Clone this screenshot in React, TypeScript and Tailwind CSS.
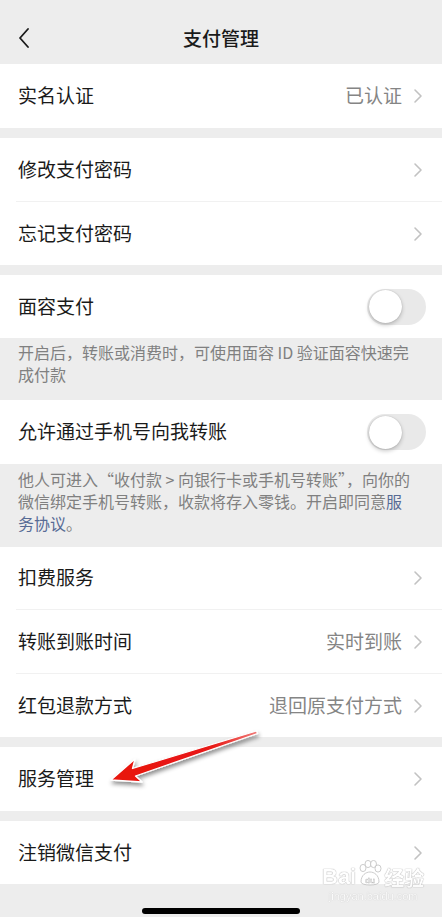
import React from "react";

function Chevron() {
  return (
    <svg width="10" height="16" viewBox="0 0 10 16" className="shrink-0">
      <path d="M2 2 L8 8 L2 14" fill="none" stroke="#c2c2c2" strokeWidth="1.6" strokeLinecap="round" strokeLinejoin="round" />
    </svg>
  );
}

function Toggle() {
  return (
    <div className="w-[59px] h-[36px] rounded-full bg-[#e9e9e9] p-[1.5px] flex items-center">
      <div className="w-[33px] h-[33px] rounded-full bg-white shadow-[0_2px_4px_rgba(0,0,0,0.22),0_0_1px_rgba(0,0,0,0.25)]" />
    </div>
  );
}

type RowProps = {
  label: string;
  value?: string;
  toggle?: boolean;
  h: string;
};

function Row({ label, value, toggle, h }: RowProps) {
  return (
    <div className={`flex items-center bg-white pl-[18px] ${toggle ? "pr-[16px]" : "pr-[19px]"} ${h}`}>
      <span className="flex-1 text-[19px] text-[#1a1a1a] leading-none mb-[3px]">{label}</span>
      {value && <span className="text-[19px] text-[#858585] leading-none mr-[11px] mb-[3px]">{value}</span>}
      {toggle ? <Toggle /> : <Chevron />}
    </div>
  );
}

function Divider() {
  return (
    <div className="bg-white">
      <div className="ml-[16px] h-px bg-[#f1f1f1]" />
    </div>
  );
}

function Gap() {
  return <div className="h-[10px]" />;
}

export default function App() {
  return (
    <div className="relative w-[442px] h-[917px] overflow-hidden bg-[#ededed] font-['Noto_Sans_CJK_SC','Noto_Sans',sans-serif]">
      {/* header */}
      <div className="h-[64px] pt-[11px] grid grid-cols-[1fr_auto_1fr] items-center">
        <div className="pl-[18px] flex items-center">
          <svg width="12" height="20" viewBox="0 0 12 20">
            <path d="M10 1 L2 10 L10 19" fill="none" stroke="#1a1a1a" strokeWidth="1.8" strokeLinecap="round" strokeLinejoin="round" />
          </svg>
        </div>
        <div className="text-[19px] font-medium text-[#1a1a1a] leading-none">支付管理</div>
        <div />
      </div>

      <Row label="实名认证" value="已认证" h="h-[64px]" />
      <Gap />
      <Row label="修改支付密码" h="h-[63px]" />
      <Divider />
      <Row label="忘记支付密码" h="h-[63px]" />
      <Gap />
      <Row label="面容支付" toggle h="h-[63px]" />
      <div className="h-[62px] pl-[18px] pr-[16px] pt-[3px] text-[16px] leading-[22px] text-[#808080] whitespace-nowrap">
        开启后，转账或消费时，可使用面容 ID 验证面容快速完
        <br />
        成付款
      </div>
      <Row label="允许通过手机号向我转账" toggle h="h-[64px]" />
      <div className="h-[83px] pl-[18px] pr-[16px] pt-[4px] text-[16px] leading-[22px] text-[#808080] whitespace-nowrap">
        他人可进入“收付款 &gt; 向银行卡或手机号转账”，向你的
        <br />
        微信绑定手机号转账，收款将存入零钱。开启即同意<span className="text-[#576b95]">服</span>
        <br />
        <span className="text-[#576b95]">务协议</span>。
      </div>
      <Row label="扣费服务" h="h-[62px]" />
      <Divider />
      <Row label="转账到账时间" value="实时到账" h="h-[63px]" />
      <Divider />
      <Row label="红包退款方式" value="退回原支付方式" h="h-[63px]" />
      <Gap />
      <Row label="服务管理" h="h-[64px]" />
      <Gap />
      <Row label="注销微信支付" h="h-[63px]" />

      {/* home indicator */}
      <div className="flex justify-center pt-[24px]">
        <div className="w-[158px] h-[6px] rounded-full bg-black" />
      </div>

      {/* watermark */}
      <div className="absolute left-[322px] top-[860px] flex flex-col items-center pointer-events-none opacity-80">
        <div className="flex items-end">
          <span className="text-[22px] font-bold leading-none text-white [text-shadow:0_0_1px_#9a9a9a,0_0_1px_#9a9a9a] font-['Liberation_Sans',sans-serif]">Bai</span>
          <svg width="26" height="28" viewBox="0 0 26 28" className="mx-[1px]">
            <g fill="white" stroke="#b0b0b0" strokeWidth="0.8">
              <ellipse cx="6" cy="8" rx="3" ry="3.6" />
              <ellipse cx="11" cy="4" rx="3" ry="3.6" />
              <ellipse cx="16.5" cy="4" rx="3" ry="3.6" />
              <ellipse cx="21" cy="8.5" rx="3" ry="3.6" />
              <path d="M4 22 C4 15 9 12 13 12 C17 12 22 15 22 22 C22 26 4 26 4 22 Z" />
            </g>
            <text x="13" y="23" textAnchor="middle" fontSize="8" fill="white" stroke="#a0a0a0" strokeWidth="0.4" fontFamily="Liberation Sans, sans-serif" fontWeight="bold">du</text>
          </svg>
          <span className="text-[20px] font-bold leading-none text-white [text-shadow:0_0_1px_#9a9a9a,0_0_1px_#9a9a9a]">经验</span>
        </div>
        <span className="mt-[3px] text-[11px] leading-none text-white [text-shadow:0_0_1px_#a8a8a8] font-['Liberation_Sans',sans-serif]">jingyan.baidu.com</span>
      </div>

      {/* red arrow annotation */}
      <svg className="absolute left-0 top-0 pointer-events-none" width="442" height="917" viewBox="0 0 442 917">
        <defs>
          <filter id="arrowShadow" x="-20%" y="-50%" width="140%" height="200%">
            <feDropShadow dx="1" dy="3" stdDeviation="2" floodColor="#000" floodOpacity="0.45" />
          </filter>
          <linearGradient id="arrowGrad" x1="111" y1="780" x2="257" y2="732" gradientUnits="userSpaceOnUse">
            <stop offset="0" stopColor="#e8120e" />
            <stop offset="0.7" stopColor="#e81a16" />
            <stop offset="1" stopColor="#f07a78" />
          </linearGradient>
        </defs>
        <path
          d="M111 780 L142 782 L135.5 776 L257.5 733.5 L256.5 731 L132.5 768.5 L135 759 Z"
          fill="url(#arrowGrad)"
          stroke="white"
          strokeWidth="1.3"
          strokeLinejoin="round"
          filter="url(#arrowShadow)"
        />
      </svg>
    </div>
  );
}
